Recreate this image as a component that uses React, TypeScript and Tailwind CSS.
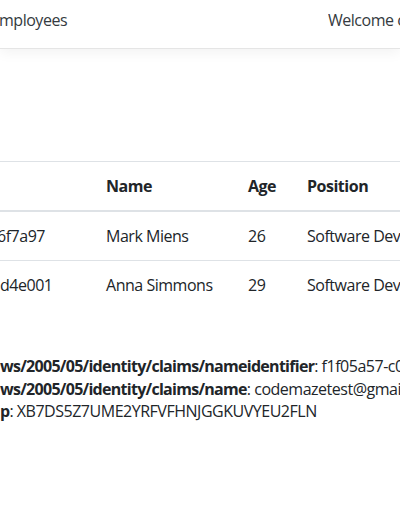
const font = "font-['Segoe_UI','Open_Sans','Noto_Sans',sans-serif] tracking-[-0.03em]";

type Employee = { id: string; name: string; age: number; position: string };

const employees: Employee[] = [
  { id: "6f7a97", name: "Mark Miens", age: 26, position: "Software Developer" },
  { id: "d4e001", name: "Anna Simmons", age: 29, position: "Software Developer" },
];

const claims = [
  { key: "ws/2005/05/identity/claims/nameidentifier", value: "f1f05a57-c0e2-4d71-9a3f-6b1c2e8d7a14" },
  { key: "ws/2005/05/identity/claims/name", value: "codemazetest@gmail.com" },
  { key: "p", value: "XB7DS5Z7UME2YRFVFHNJGGKUVYEU2FLN" },
];

export default function App() {
  return (
    <div className={`${font} w-[400px] h-[516px] overflow-hidden bg-white text-[16px] text-[#212529] whitespace-nowrap`}>
      <nav className="h-[49px] border-b border-[#e5e5e5] bg-white shadow-[0_4px_12px_rgba(0,0,0,0.05)] flex justify-between pt-2 leading-6 text-[#343a40]">
        <span className="-ml-[1px]">mployees</span>
        <span className="w-[72px] overflow-hidden">Welcome codemazetest@gmail.com</span>
      </nav>

      <div className="pt-[112px]">
        <table className="table-fixed w-[520px] border-collapse leading-6 text-left">
          <colgroup>
            <col className="w-[94px]" />
            <col className="w-[142px]" />
            <col className="w-[59px]" />
            <col />
          </colgroup>
          <thead>
            <tr className="border-t border-[#dee2e6]">
              <th className="py-3 border-b-2 border-[#dee2e6]"></th>
              <th className="py-3 px-3 border-b-2 border-[#dee2e6] font-bold">Name</th>
              <th className="py-3 px-3 border-b-2 border-[#dee2e6] font-bold">Age</th>
              <th className="py-3 px-3 border-b-2 border-[#dee2e6] font-bold">Position</th>
            </tr>
          </thead>
          <tbody>
            {employees.map((e, i) => (
              <tr key={e.id} className={i === 0 ? "border-b border-[#dee2e6]" : ""}>
                <td className="py-3 pr-3 overflow-hidden">
                  <span className={i === 0 ? "block -ml-[3px]" : "block"}>{e.id}</span>
                </td>
                <td className="py-3 px-3">{e.name}</td>
                <td className="py-3 px-3">{e.age}</td>
                <td className="py-3 px-3">{e.position}</td>
              </tr>
            ))}
          </tbody>
        </table>

        <div className="mt-[46px] leading-[22.5px]">
          {claims.map((c) => (
            <div key={c.key}>
              <span className="font-bold tracking-[-0.045em]">{c.key}</span>: {c.value}
            </div>
          ))}
        </div>
      </div>
    </div>
  );
}
